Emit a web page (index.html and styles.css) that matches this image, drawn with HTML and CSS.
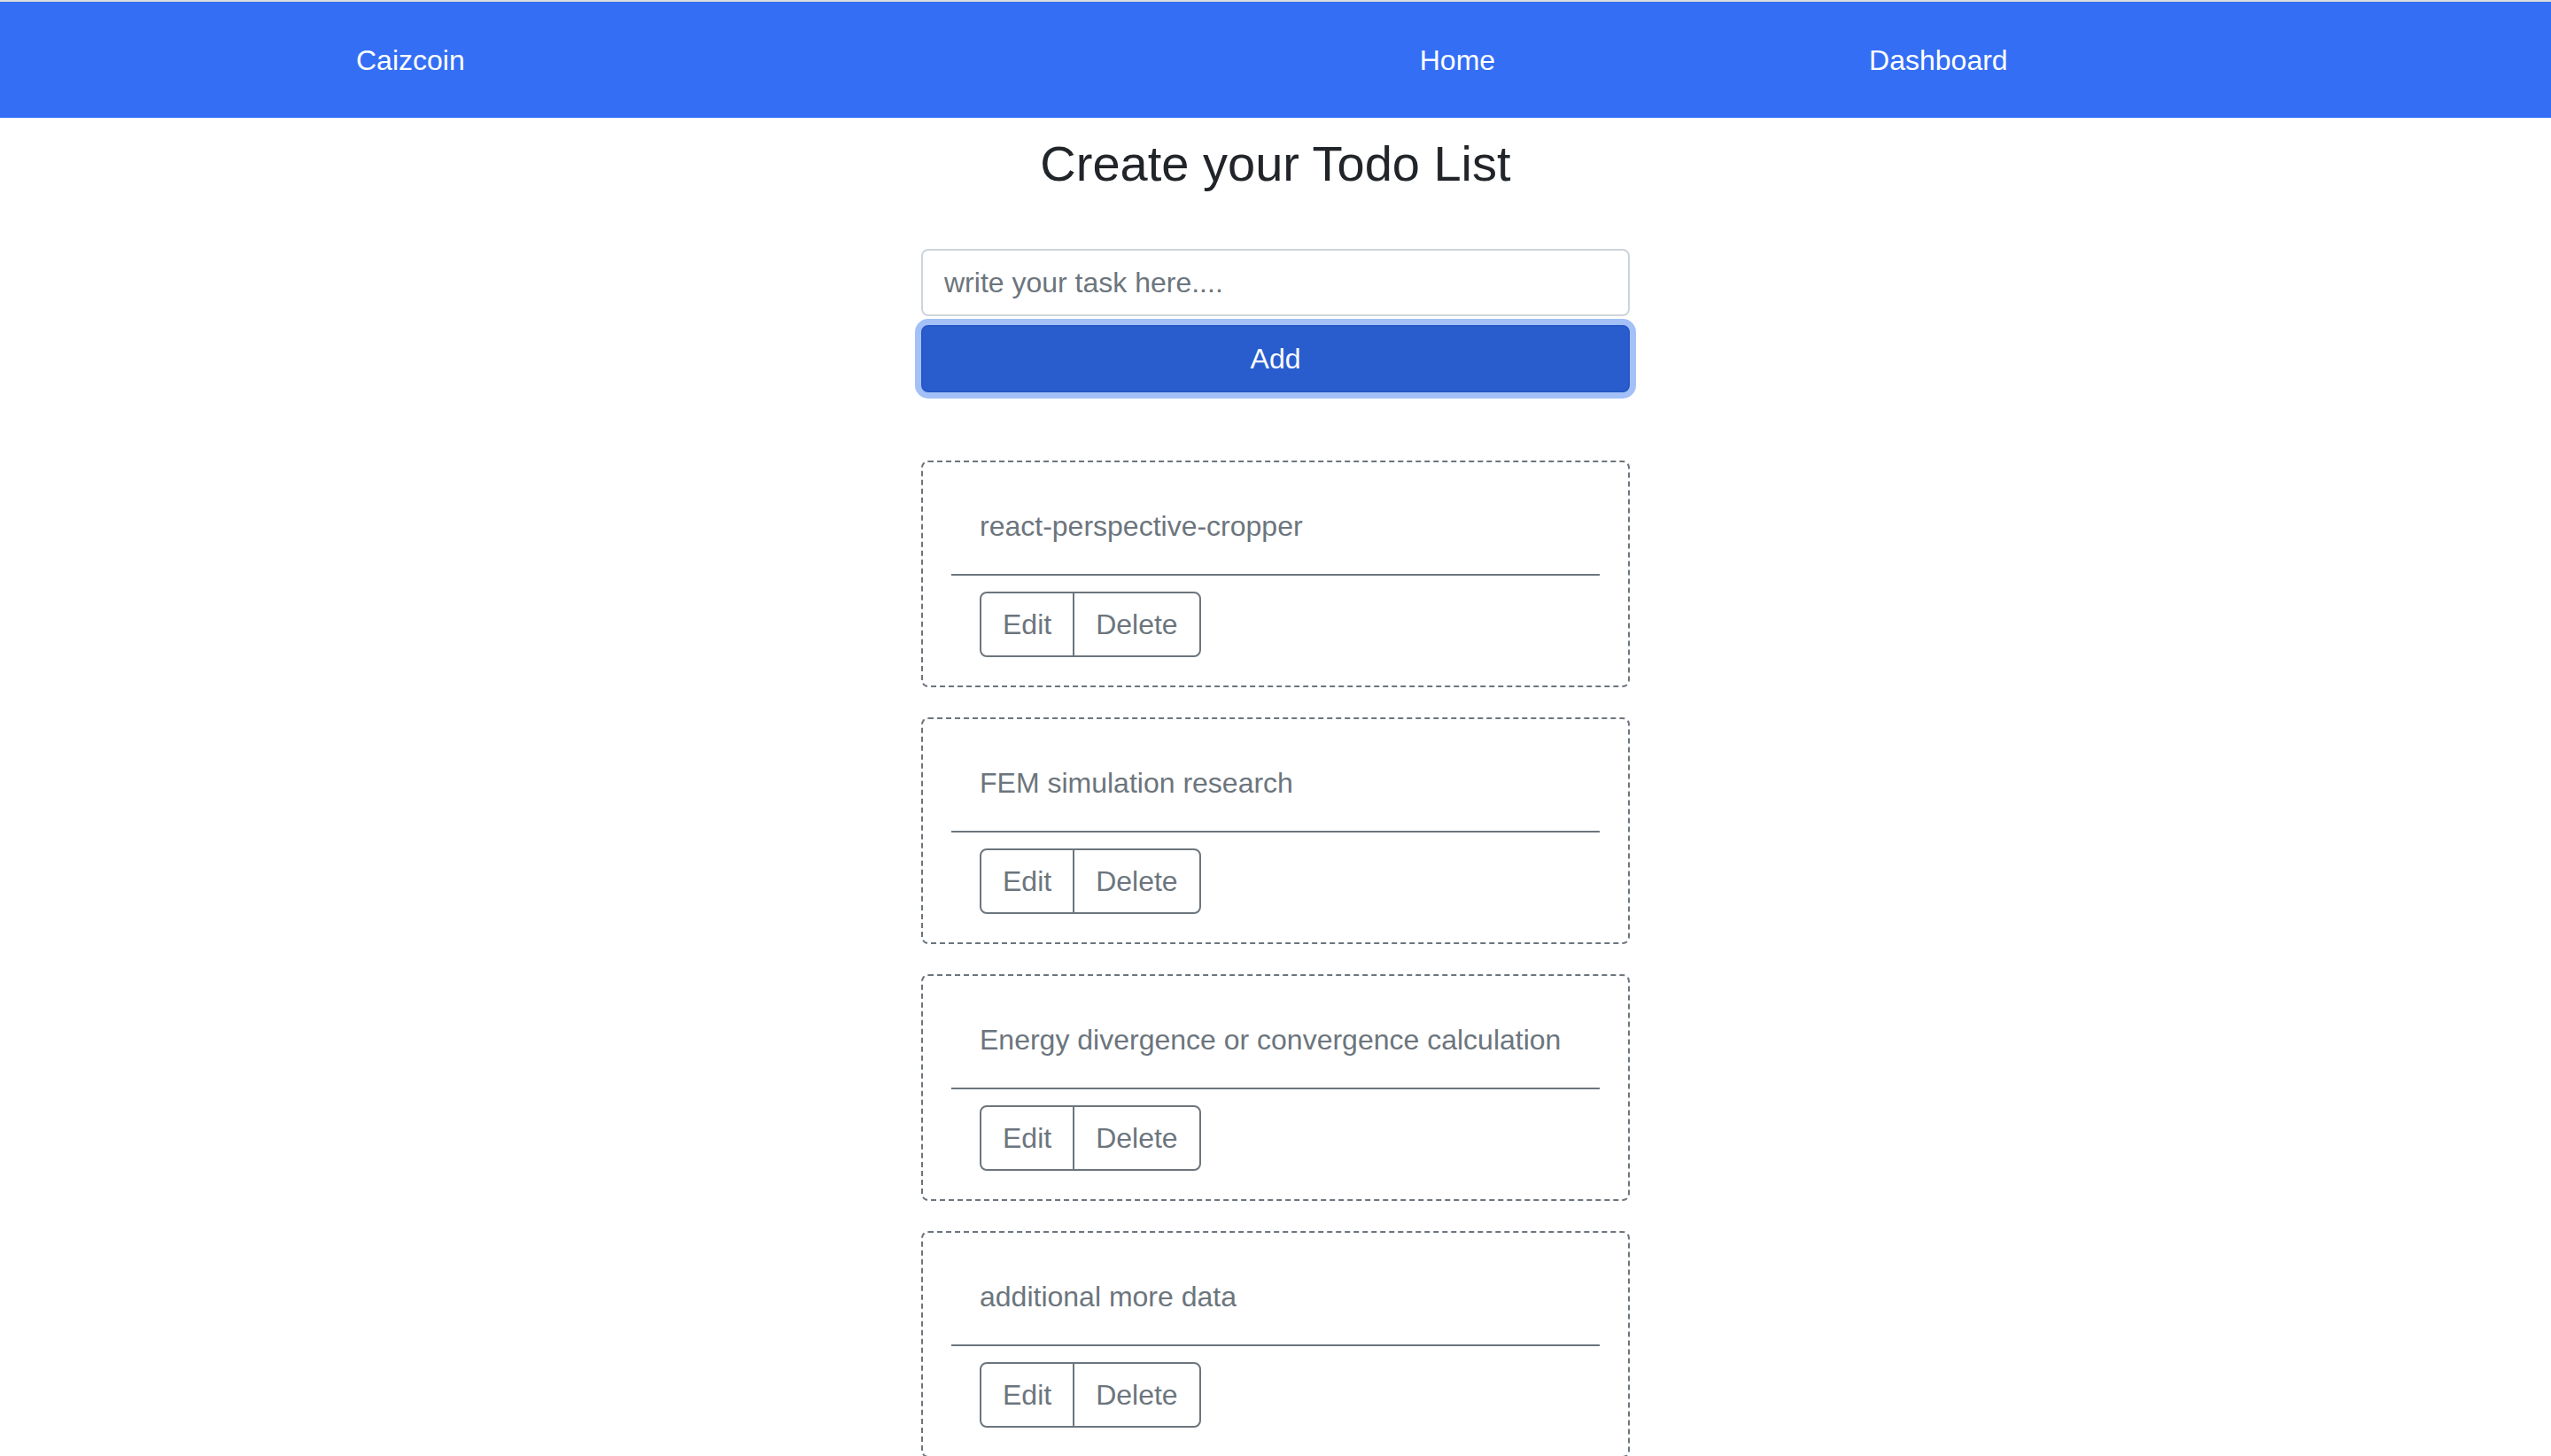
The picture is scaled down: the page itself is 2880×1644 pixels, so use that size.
FILE: index.html
```html
<!DOCTYPE html>
<html lang="en">
<head>
<meta charset="utf-8">
<title>Caizcoin - Todo</title>
<link rel="stylesheet" href="styles.css">
</head>
<body>
<nav class="navbar">
  <a class="brand" href="#">Caizcoin</a>
  <div class="nav-links">
    <a class="nav-link" href="#">Home</a>
    <a class="nav-link" href="#">Dashboard</a>
  </div>
</nav>
<main class="container">
  <h3 class="title">Create your Todo List</h3>
  <form class="todo-form">
    <input class="task-input" type="text" placeholder="write your task here....">
    <button class="add-btn" type="button">Add</button>
  </form>
  <div class="todo-list">
    <div class="todo-card">
      <div class="todo-text">react-perspective-cropper</div>
      <hr class="divider">
      <div class="btn-group">
        <button class="btn btn-left" type="button">Edit</button>
        <button class="btn btn-right" type="button">Delete</button>
      </div>
    </div>
    <div class="todo-card">
      <div class="todo-text">FEM simulation research</div>
      <hr class="divider">
      <div class="btn-group">
        <button class="btn btn-left" type="button">Edit</button>
        <button class="btn btn-right" type="button">Delete</button>
      </div>
    </div>
    <div class="todo-card">
      <div class="todo-text">Energy divergence or convergence calculation</div>
      <hr class="divider">
      <div class="btn-group">
        <button class="btn btn-left" type="button">Edit</button>
        <button class="btn btn-right" type="button">Delete</button>
      </div>
    </div>
    <div class="todo-card">
      <div class="todo-text">additional more data</div>
      <hr class="divider">
      <div class="btn-group">
        <button class="btn btn-left" type="button">Edit</button>
        <button class="btn btn-right" type="button">Delete</button>
      </div>
    </div>
  </div>
</main>
</body>
</html>
```
FILE: styles.css
```css
* {
  box-sizing: border-box;
}

html, body {
  margin: 0;
  padding: 0;
  background: #ffffff;
}

body {
  font-family: "Liberation Sans", Arial, Helvetica, sans-serif;
  font-size: 32px;
  line-height: 1.5;
  color: #212529;
}

.navbar {
  display: flex;
  align-items: center;
  height: 133px;
  border-top: 2px solid #dedede;
  background: #336ef5;
  padding-left: 402px;
}

.brand,
.nav-link {
  color: #ffffff;
  text-decoration: none;
  font-size: 32px;
  line-height: 48px;
}

.nav-links {
  display: flex;
  margin-left: 1078px;
  gap: 422px;
}

.container {
  width: 800px;
  margin: 0 auto;
}

.title {
  margin: 18px 0 0;
  text-align: center;
  font-size: 56px;
  font-weight: 400;
  line-height: 1.2;
  color: #212529;
}

.todo-form {
  display: flex;
  flex-direction: column;
  margin-top: 63px;
}

.task-input {
  width: 100%;
  height: 76px;
  padding: 12px 24px;
  border: 2px solid #ced4da;
  border-radius: 8px;
  font-family: inherit;
  font-size: 32px;
  line-height: 48px;
  color: #495057;
  background: #fff;
  outline: none;
}

.task-input::placeholder {
  color: #6c757d;
}

.add-btn {
  width: 100%;
  height: 76px;
  margin-top: 10px;
  padding: 12px 24px;
  border: 2px solid #2556c6;
  border-radius: 8px;
  background: #295dcd;
  color: #ffffff;
  font-family: inherit;
  font-size: 32px;
  line-height: 48px;
  box-shadow: 0 0 0 7px #a3c0f7;
}

.todo-list {
  margin-top: 77px;
}

.todo-card {
  border: 2px dashed #6c757d;
  border-radius: 8px;
  padding: 32px;
  margin-bottom: 34px;
}

.todo-text {
  padding: 16px 32px 14px;
  font-size: 32px;
  line-height: 48px;
  color: #6c757d;
}

.divider {
  border: 0;
  border-top: 2px solid #6c757d;
  margin: 16px 0 18px;
}

.btn-group {
  display: inline-flex;
  margin-left: 32px;
}

.btn {
  border: 2px solid #6c757d;
  background: transparent;
  color: #6c757d;
  font-family: inherit;
  font-size: 32px;
  line-height: 48px;
  padding: 11px 24px;
}

.btn-left {
  border-radius: 8px 0 0 8px;
}

.btn-right {
  border-radius: 0 8px 8px 0;
  margin-left: -2px;
}
```
